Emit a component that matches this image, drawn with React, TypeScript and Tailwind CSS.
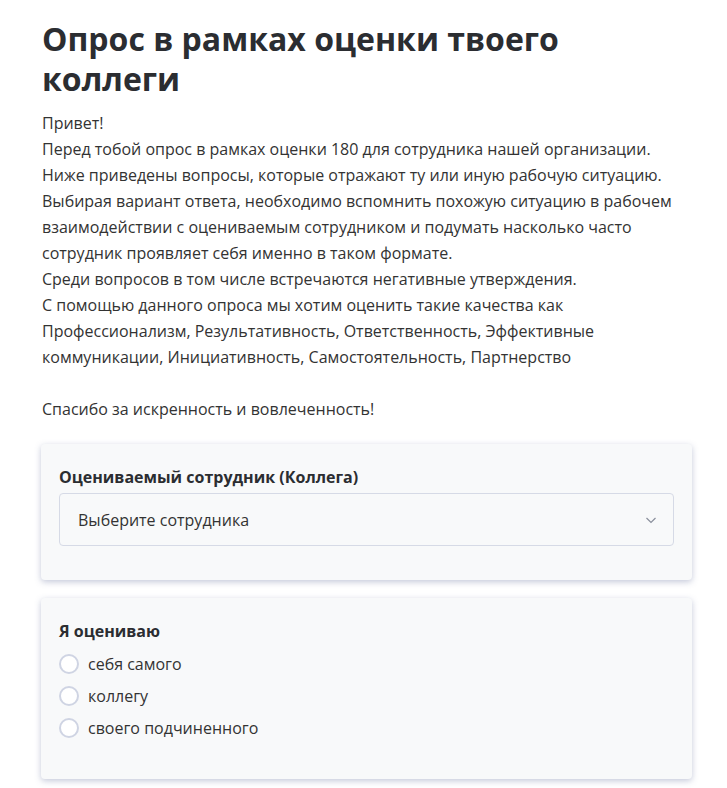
const options = ["себя самого", "коллегу", "своего подчиненного"];

function Card({ children, bottom }: { children: React.ReactNode; bottom: string }) {
  return (
    <div className={`rounded-[4px] bg-[#f8f9fa] px-[18px] pt-[22px] shadow-[0_2px_6px_rgba(90,100,150,0.35)] ${bottom}`}>
      {children}
    </div>
  );
}

export default function App() {
  return (
    <div className="min-h-screen bg-white font-['Open_Sans',sans-serif] text-[#333]">
      <div className="ml-[41px] w-[651px] pt-[19px] pb-[40px]">
        <h1 className="pl-[1px] text-[32px] font-bold leading-[40px] text-[#2b2d31]">
          Опрос в рамках оценки твоего коллеги
        </h1>
        <div className="mt-[11px] pl-[1px] pr-[1px] text-[16px] leading-[26px]">
          <p>Привет!</p>
          <p>Перед тобой опрос в рамках оценки 180 для сотрудника нашей организации.</p>
          <p>Ниже приведены вопросы, которые отражают ту или иную рабочую ситуацию.</p>
          <p>
            Выбирая вариант ответа, необходимо вспомнить похожую ситуацию в рабочем взаимодействии с
            оцениваемым сотрудником и подумать насколько часто сотрудник проявляет себя именно в
            таком формате.
          </p>
          <p>Среди вопросов в том числе встречаются негативные утверждения.</p>
          <p>
            С помощью данного опроса мы хотим оценить такие качества как Профессионализм,
            Результативность, Ответственность, Эффективные коммуникации, Инициативность,
            Самостоятельность, Партнерство
          </p>
          <p className="mt-[26px]">Спасибо за искренность и вовлеченность!</p>
        </div>

        <div className="mt-[22px] flex flex-col gap-[18px]">
          <Card bottom="pb-[34px]">
            <div className="text-[16px] font-bold leading-[22px] text-[#2b2d31]">
              Оцениваемый сотрудник (Коллега)
            </div>
            <div className="mt-[5px] flex h-[53px] items-center justify-between rounded-[4px] border border-[#d6dae6] bg-[#f8f9fa] pl-[18px] pr-[16px]">
              <span className="text-[16px] text-[#333]">Выберите сотрудника</span>
              <svg width="12" height="12" viewBox="0 0 12 12" fill="none">
                <path d="M1.5 4L6 8.5 10.5 4" stroke="#8a8f9c" strokeWidth="1.2" />
              </svg>
            </div>
          </Card>

          <Card bottom="pb-[41px]">
            <div className="text-[16px] font-bold leading-[22px] text-[#2b2d31]">Я оцениваю</div>
            <div className="mt-[12px] flex flex-col gap-[12px]">
              {options.map((o) => (
                <label key={o} className="flex items-center gap-[9px]">
                  <span className="h-[20px] w-[20px] rounded-full border-2 border-[#cfd4e3] bg-white" />
                  <span className="text-[16px] leading-[20px]">{o}</span>
                </label>
              ))}
            </div>
          </Card>
        </div>
      </div>
    </div>
  );
}
